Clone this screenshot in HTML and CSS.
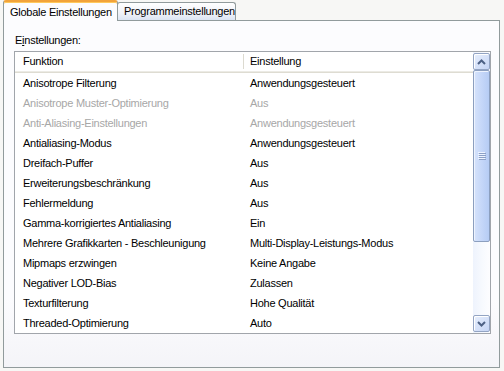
FILE: index.html
```html
<!DOCTYPE html>
<html lang="de">
<head>
<meta charset="utf-8">
<title>Einstellungen</title>
<link rel="stylesheet" href="styles.css">
</head>
<body>
<div class="window">
  <div class="tabs">
    <div class="tab active">Globale Einstellungen</div>
    <div class="tab">Programmeinstellungen</div>
  </div>
  <div class="panel">
    <div class="label">E<u>i</u>nstellungen:</div>
    <div class="listview">
      <div class="list">
        <div class="header">
          <div class="hcell c1">Funktion</div>
          <div class="hcell c2">Einstellung</div>
        </div>
        <div class="row"><span class="c1">Anisotrope Filterung</span><span class="c2">Anwendungsgesteuert</span></div>
        <div class="row disabled"><span class="c1">Anisotrope Muster-Optimierung</span><span class="c2">Aus</span></div>
        <div class="row disabled"><span class="c1">Anti-Aliasing-Einstellungen</span><span class="c2">Anwendungsgesteuert</span></div>
        <div class="row"><span class="c1">Antialiasing-Modus</span><span class="c2">Anwendungsgesteuert</span></div>
        <div class="row"><span class="c1">Dreifach-Puffer</span><span class="c2">Aus</span></div>
        <div class="row"><span class="c1">Erweiterungsbeschränkung</span><span class="c2">Aus</span></div>
        <div class="row"><span class="c1">Fehlermeldung</span><span class="c2">Aus</span></div>
        <div class="row"><span class="c1">Gamma-korrigiertes Antialiasing</span><span class="c2">Ein</span></div>
        <div class="row"><span class="c1">Mehrere Grafikkarten - Beschleunigung</span><span class="c2">Multi-Display-Leistungs-Modus</span></div>
        <div class="row"><span class="c1">Mipmaps erzwingen</span><span class="c2">Keine Angabe</span></div>
        <div class="row"><span class="c1">Negativer LOD-Bias</span><span class="c2">Zulassen</span></div>
        <div class="row"><span class="c1">Texturfilterung</span><span class="c2">Hohe Qualität</span></div>
        <div class="row"><span class="c1">Threaded-Optimierung</span><span class="c2">Auto</span></div>
      </div>
      <div class="scrollbar">
        <div class="sb-btn">
          <svg width="9" height="6" viewBox="0 0 9 6"><path d="M1 5 L4.5 1.5 L8 5" fill="none" stroke="#4d6185" stroke-width="2"/></svg>
        </div>
        <div class="sb-thumb">
          <svg width="8" height="8" viewBox="0 0 8 8">
            <rect x="0" y="0" width="7" height="1" fill="#eef4ff"/>
            <rect x="1" y="1" width="7" height="1" fill="#8ca0c6"/>
            <rect x="0" y="2" width="7" height="1" fill="#eef4ff"/>
            <rect x="1" y="3" width="7" height="1" fill="#8ca0c6"/>
            <rect x="0" y="4" width="7" height="1" fill="#eef4ff"/>
            <rect x="1" y="5" width="7" height="1" fill="#8ca0c6"/>
            <rect x="0" y="6" width="7" height="1" fill="#eef4ff"/>
            <rect x="1" y="7" width="7" height="1" fill="#8ca0c6"/>
          </svg>
        </div>
        <div class="sb-track"></div>
        <div class="sb-btn">
          <svg width="9" height="6" viewBox="0 0 9 6"><path d="M1 1 L4.5 4.5 L8 1" fill="none" stroke="#4d6185" stroke-width="2"/></svg>
        </div>
      </div>
    </div>
  </div>
</div>
</body>
</html>
```

FILE: styles.css
```css
html, body {
  margin: 0;
  padding: 0;
}
body {
  width: 504px;
  height: 371px;
  overflow: hidden;
  background: #f7f7f5;
  font-family: "Liberation Sans", Arial, sans-serif;
  font-size: 11px;
  letter-spacing: -0.25px;
  color: #000;
}
.window {
  height: 371px;
  display: flex;
  flex-direction: column;
}
.tabs {
  display: flex;
  align-items: flex-end;
  height: 20px;
  padding-left: 3px;
}
.tab {
  box-sizing: border-box;
  height: 18px;
  padding: 0 6px;
  line-height: 17px;
  border: 1px solid #919b9c;
  border-bottom: none;
  border-radius: 3px 3px 0 0;
  background: linear-gradient(#ffffff, #f0f2f8 60%, #dbe4f3);
  white-space: nowrap;
}
.tab.active {
  position: relative;
  z-index: 1;
  height: 21px;
  margin-bottom: -1px;
  width: 115px;
  padding: 0 6px;
  line-height: 20px;
  background: #fcfcfe;
  border-top: 2px solid #f2a33a;
  box-shadow: inset 0 1px 0 #ffc95c;
}
.tab + .tab {
  width: 119px;
  margin-left: -1px;
  padding-left: 6px;
}
.panel {
  flex: 1;
  margin: 0 4px 3px 3px;
  border: 1px solid #919b9c;
  background: linear-gradient(#fcfcfe, #fcfcfe 80%, #f4f4f8);
  display: flex;
  flex-direction: column;
}
.label {
  padding: 13px 0 0 11px;
  line-height: 13px;
  margin-bottom: 4px;
}
.label u {
  text-decoration: underline;
}
.listview {
  margin-left: 10px;
  width: 477px;
  height: 283px;
  box-sizing: border-box;
  border: 1px solid #a1a5ab;
  background: #fff;
  display: flex;
  overflow: hidden;
}
.list {
  flex: 1;
  overflow: hidden;
}
.header {
  display: flex;
  height: 20px;
  border-bottom: 1px solid #dedcd2;
  box-shadow: 0 -1px 0 #ecebe5 inset;
}
.header .c1 {
  width: 220px;
  padding-left: 8px;
  border-right: 1px solid #dcdad0;
  margin: 2px 0 3px;
  line-height: 15px;
}
.header .c2 {
  padding-left: 6px;
  margin: 2px 0 3px;
  line-height: 15px;
}
.row {
  display: flex;
  height: 20px;
  line-height: 20px;
  white-space: nowrap;
}
.row .c1 {
  width: 221px;
  padding-left: 8px;
}
.row .c2 {
  padding-left: 6px;
}
.row.disabled {
  color: #a7a7a7;
}
.scrollbar {
  width: 17px;
  display: flex;
  flex-direction: column;
  background: linear-gradient(90deg, #eef3fd, #f6f9fe 50%, #fdfdff);
}
.sb-btn {
  box-sizing: border-box;
  height: 17px;
  margin: 1px 0 0;
  border: 1px solid #93a4c3;
  border-radius: 2px;
  background: linear-gradient(135deg, #e7effd, #c6d5f5);
  box-shadow: inset 1px 1px 0 #ffffff;
  display: flex;
  align-items: center;
  justify-content: center;
}
.sb-btn:last-child {
  margin: 0 0 1px;
}
.sb-thumb {
  box-sizing: border-box;
  height: 172px;
  border: 1px solid #8c9fbf;
  border-radius: 2px;
  background: linear-gradient(90deg, #d6e3fb, #c4d6f8 55%, #b6ccf4);
  box-shadow: inset 1px 1px 0 #eef4ff;
  display: flex;
  align-items: center;
  justify-content: center;
}
.sb-track {
  flex: 1;
}
```
